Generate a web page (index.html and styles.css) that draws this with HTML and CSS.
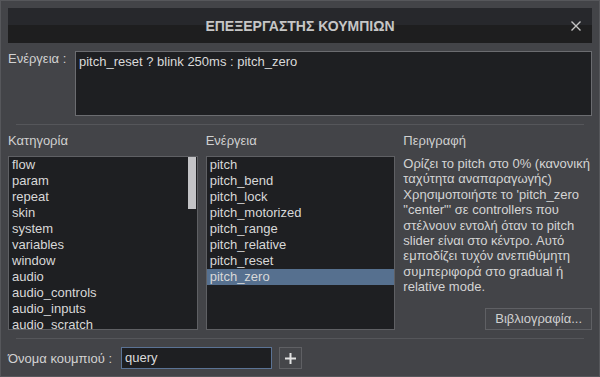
FILE: index.html
```html
<!DOCTYPE html>
<html lang="el">
<head>
  <meta charset="UTF-8" />
  <meta name="viewport" content="width=device-width, initial-scale=1" />
  <title>Επεξεργαστής κουμπιών</title>
  <link rel="stylesheet" href="styles.css">
</head>
<body>
  <div class="window">
    <div class="titlebar">
      <span></span>
      <div class="title">ΕΠΕΞΕΡΓΑΣΤΗΣ ΚΟΥΜΠΙΩΝ</div>
      <div class="close">
        <svg width="10" height="10" viewBox="0 0 10 10">
          <path d="M0.5 0.5 L9.5 9.5 M9.5 0.5 L0.5 9.5" stroke="#c4c4c4" stroke-width="1.4" fill="none"/>
        </svg>
      </div>
    </div>

    <div class="action-row">
      <div class="action-label">Ενέργεια :</div>
      <div class="action-box">pitch_reset ? blink 250ms : pitch_zero</div>
    </div>

    <hr class="sep">

    <div class="columns">
      <div class="col">
        <div class="col-title">Κατηγορία</div>
        <div class="list">
          <div class="list-items">
            <div class="row">flow</div>
            <div class="row">param</div>
            <div class="row">repeat</div>
            <div class="row">skin</div>
            <div class="row">system</div>
            <div class="row">variables</div>
            <div class="row">window</div>
            <div class="row">audio</div>
            <div class="row">audio_controls</div>
            <div class="row">audio_inputs</div>
            <div class="row">audio_scratch</div>
          </div>
          <div class="scrollbar"><div class="thumb"></div></div>
        </div>
      </div>

      <div class="col">
        <div class="col-title">Ενέργεια</div>
        <div class="list">
          <div class="list-items">
            <div class="row">pitch</div>
            <div class="row">pitch_bend</div>
            <div class="row">pitch_lock</div>
            <div class="row">pitch_motorized</div>
            <div class="row">pitch_range</div>
            <div class="row">pitch_relative</div>
            <div class="row">pitch_reset</div>
            <div class="row selected">pitch_zero</div>
          </div>
        </div>
      </div>

      <div class="col col-desc">
        <div class="col-title">Περιγραφή</div>
        <div class="desc">
          Ορίζει το pitch στο 0% (κανονική<br>
          ταχύτητα αναπαραγωγής)<br>
          Χρησιμοποιήστε το 'pitch_zero<br>
          "center"' σε controllers που<br>
          στέλνουν εντολή όταν το pitch<br>
          slider είναι στο κέντρο. Αυτό<br>
          εμποδίζει τυχόν ανεπιθύμητη<br>
          συμπεριφορά στο gradual ή<br>
          relative mode.
        </div>
        <div class="btn-wrap">
          <div class="btn">Βιβλιογραφία...</div>
        </div>
      </div>
    </div>

    <hr class="sep">

    <div class="name-row">
      <div class="name-label">Όνομα κουμπιού :</div>
      <div class="name-input">query</div>
      <div class="add-btn">
        <svg width="11" height="11" viewBox="0 0 11 11">
          <path d="M5.5 0 V11 M0 5.5 H11" stroke="#e2e2e2" stroke-width="2" fill="none"/>
        </svg>
      </div>
    </div>
  </div>
</body>
</html>
```

FILE: styles.css
```css
body {
  margin: 0;
  background: #434448;
  font-family: "Liberation Sans", Arial, sans-serif;
  font-size: 13px;
  color: #d2d2d2;
}

.window {
  width: 600px;
  height: 377px;
  box-sizing: border-box;
  border: 1px solid #56575b;
  background: #434448;
  padding: 7px;
  display: flex;
  flex-direction: column;
}

.titlebar {
  height: 35px;
  flex-shrink: 0;
  background: linear-gradient(#27282c 17px, #1e1e1f 17px);
  display: grid;
  grid-template-columns: 1fr auto 1fr;
  align-items: center;
}

.title {
  font-size: 14px;
  font-weight: bold;
  color: #c6c6c6;
}

.close {
  justify-self: end;
  margin-right: 11px;
  height: 10px;
}

.close svg {
  display: block;
}

.action-row {
  display: flex;
  margin-top: 8px;
}

.action-label {
  width: 67px;
  flex-shrink: 0;
  line-height: 15px;
}

.action-box {
  flex: 1;
  height: 65px;
  box-sizing: border-box;
  background: #1e1f22;
  border: 1px solid #6b6c70;
  padding: 2px 3px;
  line-height: 15px;
  color: #dadada;
}

.sep {
  border: 0;
  border-top: 1px solid #55565a;
  margin: 8px 8px;
  height: 0;
  flex-shrink: 0;
}

.columns {
  display: flex;
  gap: 8px;
}

.col {
  width: 190px;
  display: flex;
  flex-direction: column;
}

.col-title {
  height: 23px;
  line-height: 15px;
  color: #d0d0d0;
}

.list {
  height: 174px;
  box-sizing: border-box;
  background: #1e1f22;
  border: 1px solid #5f6064;
  display: flex;
  overflow: hidden;
}

.list-items {
  flex: 1;
}

.row {
  height: 16px;
  line-height: 16px;
  padding-left: 3px;
  color: #d8d8d8;
  white-space: nowrap;
}

.row.selected {
  background: #56708f;
}

.scrollbar {
  width: 10px;
  flex-shrink: 0;
}

.thumb {
  height: 52px;
  margin: 0 1px;
  background: #c3c3c6;
}

.col-desc {
  width: 189px;
}

.desc {
  line-height: 15.4px;
  color: #d4d4d4;
  white-space: nowrap;
  flex: 1;
}

.btn-wrap {
  display: flex;
  justify-content: flex-end;
}

.btn {
  height: 22px;
  box-sizing: border-box;
  border: 1px solid #5f6064;
  background: #45464a;
  padding: 0 9px;
  line-height: 20px;
  color: #d0d0d0;
}

.name-row {
  display: flex;
  align-items: center;
}

.name-label {
  width: 113px;
  flex-shrink: 0;
}

.name-input {
  width: 151px;
  height: 22px;
  box-sizing: border-box;
  background: #1e1f22;
  border: 1px solid #5b7395;
  padding: 0 3px;
  line-height: 20px;
  color: #dadada;
}

.add-btn {
  width: 23px;
  height: 22px;
  box-sizing: border-box;
  margin-left: 7px;
  border: 1px solid #5f6064;
  background: #45464a;
  display: flex;
  align-items: center;
  justify-content: center;
}
```
